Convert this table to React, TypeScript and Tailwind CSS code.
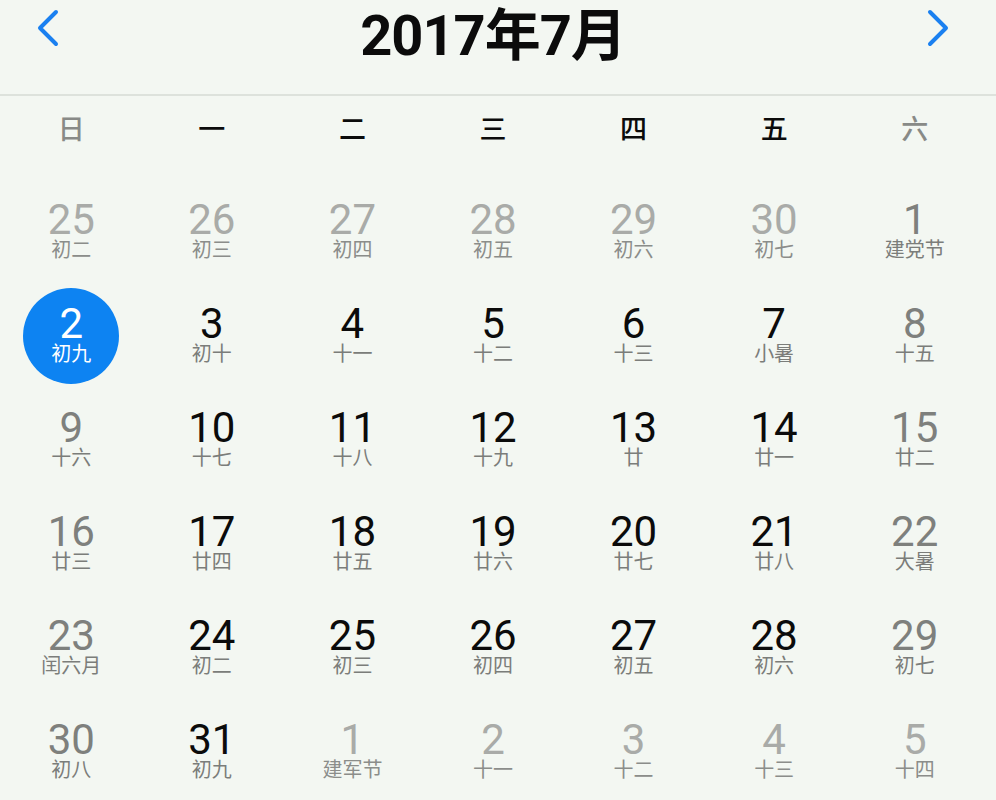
type TDay = {
  day: number;
  lunar: string;
  other?: boolean;
  weekend?: boolean;
  selected?: boolean;
};

const weekDays = ["日", "一", "二", "三", "四", "五", "六"];

const raw: [number, string, boolean][] = [
  [25, "初二", true],
  [26, "初三", true],
  [27, "初四", true],
  [28, "初五", true],
  [29, "初六", true],
  [30, "初七", true],
  [1, "建党节", false],
  [2, "初九", false],
  [3, "初十", false],
  [4, "十一", false],
  [5, "十二", false],
  [6, "十三", false],
  [7, "小暑", false],
  [8, "十五", false],
  [9, "十六", false],
  [10, "十七", false],
  [11, "十八", false],
  [12, "十九", false],
  [13, "廿", false],
  [14, "廿一", false],
  [15, "廿二", false],
  [16, "廿三", false],
  [17, "廿四", false],
  [18, "廿五", false],
  [19, "廿六", false],
  [20, "廿七", false],
  [21, "廿八", false],
  [22, "大暑", false],
  [23, "闰六月", false],
  [24, "初二", false],
  [25, "初三", false],
  [26, "初四", false],
  [27, "初五", false],
  [28, "初六", false],
  [29, "初七", false],
  [30, "初八", false],
  [31, "初九", false],
  [1, "建军节", true],
  [2, "十一", true],
  [3, "十二", true],
  [4, "十三", true],
  [5, "十四", true],
];

const days: TDay[] = raw.map(([day, lunar, other], i) => ({
  day,
  lunar,
  other,
  weekend: i % 7 === 0 || i % 7 === 6,
  selected: i === 7,
}));

const DayCell = ({ d }: { d: TDay }) => {
  let numColor = "text-[#0b0b0b]";
  let lunarColor = "text-[#7b7d7a]";
  if (d.other) {
    numColor = "text-[#a9aba8]";
    lunarColor = "text-[#8b8d8a]";
  } else if (d.weekend) {
    numColor = "text-[#7e807d]";
  }
  if (d.selected) {
    numColor = "text-white";
    lunarColor = "text-white";
  }

  return (
    <div className="h-[104px] flex items-center justify-center">
      <div
        className={
          d.selected
            ? "w-[96px] h-[96px] rounded-full bg-[#0d83f2] flex flex-col items-center justify-center"
            : "w-[96px] h-[96px] flex flex-col items-center justify-center"
        }
      >
        <span className={`text-[42px] leading-[40px] ${numColor}`}>
          {d.day}
        </span>
        <span className={`text-[20px] leading-[20px] mb-[4px] ${lunarColor}`}>
          {d.lunar}
        </span>
      </div>
    </div>
  );
};

const App = () => {
  return (
    <div
      className="w-[996px] h-[800px] overflow-hidden bg-[#f3f7f2]"
      style={{ fontFamily: "Roboto, 'Noto Sans CJK SC', sans-serif" }}
    >
      {/* header */}
      <div className="h-[96px] border-b-2 border-[#dde2dc]">
        <div className="w-[984px] ml-[1px] flex items-start justify-between px-[33px] pt-[5px]">
          <button className="w-[28px] h-[40px] mt-[3px] flex items-center justify-center">
            <svg width="24" height="40" viewBox="0 0 24 40" fill="none">
              <polyline
                points="20,4 4,20 20,36"
                stroke="#1a80f0"
                strokeWidth="4"
                strokeLinecap="round"
                strokeLinejoin="round"
              />
            </svg>
          </button>
          <h1 className="text-[56px] leading-[56px] mt-[3px] font-bold text-[#0b0b0b] tracking-[-1px]">
            2017年7月
          </h1>
          <button className="w-[28px] h-[40px] mt-[3px] flex items-center justify-center">
            <svg width="24" height="40" viewBox="0 0 24 40" fill="none">
              <polyline
                points="4,4 20,20 4,36"
                stroke="#1a80f0"
                strokeWidth="4"
                strokeLinecap="round"
                strokeLinejoin="round"
              />
            </svg>
          </button>
        </div>
      </div>

      {/* week days */}
      <div className="w-[984px] ml-[1px] grid grid-cols-7 h-[68px] items-center">
        {weekDays.map((w, i) => (
          <div
            key={w}
            className={`text-center text-[27px] font-medium ${
              i === 0 || i === 6 ? "text-[#888a87]" : "text-[#0b0b0b]"
            }`}
          >
            {w}
          </div>
        ))}
      </div>

      {/* days */}
      <div className="w-[984px] ml-[1px] grid grid-cols-7 pt-[16px]">
        {days.map((d, index) => (
          <DayCell key={index} d={d} />
        ))}
      </div>
    </div>
  );
};

export default App;
